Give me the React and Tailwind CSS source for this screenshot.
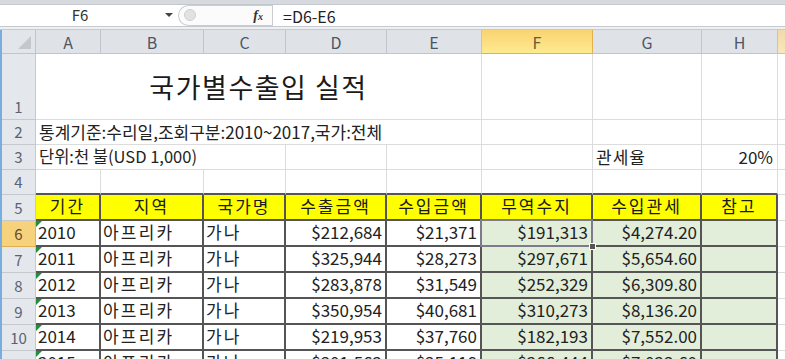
import clsx from 'clsx'

const font = "font-['Noto_Sans_CJK_KR','Noto_Sans',sans-serif]"

const cols = ['A', 'B', 'C', 'D', 'E', 'F', 'G', 'H']

const heads = ['기간', '지역', '국가명', '수출금액', '수입금액', '무역수지', '수입관세', '참고']

const rows = [
  ['2010', '아프리카', '가나', '$212,684', '$21,371', '$191,313', '$4,274.20', ''],
  ['2011', '아프리카', '가나', '$325,944', '$28,273', '$297,671', '$5,654.60', ''],
  ['2012', '아프리카', '가나', '$283,878', '$31,549', '$252,329', '$6,309.80', ''],
  ['2013', '아프리카', '가나', '$350,954', '$40,681', '$310,273', '$8,136.20', ''],
  ['2014', '아프리카', '가나', '$219,953', '$37,760', '$182,193', '$7,552.00', ''],
  ['2015', '아프리카', '가나', '$301,562', '$35,118', '$266,444', '$7,023.60', ''],
]

const grid = 'border-r border-b border-[#dcdcdc]'
const dark = 'border-r-2 border-b-2 border-[#555]'

function RowHead({ n, active }) {
  return (
    <div className={clsx(
      'flex items-end justify-center pb-[1px] text-[15px] border-r border-b',
      active
        ? 'bg-[#f7d27c] text-[#5d4a2a] border-[#e0b050]'
        : 'bg-[#e4e7ec] text-[#5b6272] border-[#c5c9cf]'
    )}>
      {n}
    </div>
  )
}

function Blank({ className }) {
  return <div className={clsx(grid, className)} />
}

export default function App() {
  return (
    <div className={clsx('w-[785px] h-[359px] overflow-hidden bg-white relative text-[#222]', font)}>
      {/* formula bar */}
      <div className="h-[5px] bg-[#d6dade] border-b border-[#c3c8ce]" />
      <div className="h-[21px] flex items-stretch bg-white">
        <div className="w-[178px] relative flex items-center justify-center text-[15px] text-[#333]">
          <span className="mr-[18px]">F6</span>
          <span className="absolute right-[5px] top-[8px] w-0 h-0 border-l-[4px] border-r-[4px] border-t-[4px] border-l-transparent border-r-transparent border-t-[#444]" />
        </div>
        <div className="w-[94px] relative flex items-center border border-r-0 border-[#c9cdd3] rounded-l-full bg-[#fbfbfc]">
          <span className="absolute left-[5px] top-[3px] w-[12px] h-[12px] rounded-full bg-[#e2e2e2] border border-[#d0d0d0]" />
          <span className="ml-auto mr-[9px] font-['Liberation_Serif',serif] italic font-bold text-[14px] text-[#333] leading-none">
            f<span className="text-[10px]">x</span>
          </span>
        </div>
        <div className="flex-1 flex items-center pl-[10px] text-[16px] text-[#222] border-l border-[#c9cdd3]">
          =D6-E6
        </div>
      </div>
      <div className="h-[4px] bg-[#eef0f2] border-t border-b border-[#c6cad0]" />

      {/* sheet */}
      <div className="grid grid-cols-[34px_65px_103px_82px_101px_95px_111px_109px_76px_1fr] grid-rows-[24px_66px_25px_25px_25px_26px_26px_26px_26px_26px_26px_26px] border-l-2 border-[#79acdf]">
        {/* column headers */}
        <div className="relative bg-[#e2e5ea] border-r border-b border-[#c1c5cb]">
          <svg className="absolute right-[4px] bottom-[4px]" width="13" height="13"><polygon points="13,0 13,13 0,13" fill="#c3c8ce" /></svg>
        </div>
        {cols.map(c => (
          <div
            key={c}
            className={clsx(
              'flex items-center justify-center text-[16px] border-r border-b',
              c === 'F'
                ? 'bg-linear-to-b from-[#f9d372] to-[#feea8f] text-[#6b5a35] border-[#e2b24e]'
                : 'bg-[#dfe3e8] text-[#4d5565] border-[#c1c5cb]'
            )}
          >
            {c}
          </div>
        ))}
        <div className="bg-linear-to-b from-[#f3d9a8] to-[#f8e6bd] border-b border-[#c1c5cb]" />

        {/* row 1 */}
        <RowHead n="1" />
        <div className={clsx('col-span-5 flex items-end justify-center pb-[12px] text-[27px] text-[#1a1a1a] tracking-[1.5px]', grid)}>
          국가별수출입 실적
        </div>
        <Blank />
        <Blank />
        <Blank />
        <Blank className="border-r-0" />

        {/* row 2 */}
        <RowHead n="2" />
        <div className={clsx('col-span-5 flex items-end pl-[3px] text-[17px] whitespace-nowrap', grid)}>
          통계기준:수리일,조회구분:2010~2017,국가:전체
        </div>
        <Blank />
        <Blank />
        <Blank />
        <Blank className="border-r-0" />

        {/* row 3 */}
        <RowHead n="3" />
        <div className={clsx('col-span-3 flex items-end pl-[3px] text-[16.5px] whitespace-nowrap', grid)}>
          단위:천 불(USD 1,000)
        </div>
        <Blank />
        <Blank />
        <Blank />
        <div className={clsx('flex items-end pl-[3px] text-[17px] tracking-[1px]', grid)}>관세율</div>
        <div className={clsx('flex items-end justify-end pr-[4px] text-[17px]', grid)}>20%</div>
        <Blank className="border-r-0" />

        {/* row 4 */}
        <RowHead n="4" />
        {cols.map(c => (
          <div key={c} className={clsx(grid, 'border-b-2 border-b-[#555]')} />
        ))}
        <Blank className="border-r-0" />

        {/* row 5 header */}
        <RowHead n="5" />
        {heads.map(h => (
          <div key={h} className={clsx('flex items-end justify-center pb-[1px] bg-[#ffff00] text-[17px] tracking-[2px] text-[#1a1a1a]', dark)}>
            {h}
          </div>
        ))}
        <Blank className="border-r-0" />

        {/* data */}
        {rows.map((r, i) => (
          <Row key={i} n={i + 6} data={r} />
        ))}
      </div>
    </div>
  )
}

function Row({ n, data }) {
  const selected = n === 6
  return (
    <>
      <RowHead n={n} active={selected} />
      {data.map((v, j) => {
        const right = j >= 3
        const green = j >= 5
        return (
          <div
            key={j}
            className={clsx(
              'flex items-end pb-[1px] text-[17px] whitespace-nowrap text-[#222]',
              right ? 'justify-end pr-[3px]' : 'pl-[2px]',
              (j === 1 || j === 2) && 'tracking-[2.2px]',
              green && 'bg-[#e3eeda]',
              (j === 0 || selected && j === 5) && 'relative',
              dark
            )}
          >
            {j === 0 && (
              <svg className="absolute left-0 top-0" width="6" height="6"><polygon points="0,0 6,0 0,6" fill="#1f8f3a" /></svg>
            )}
            {v}
            {selected && j === 5 && (
              <>
                <span className="absolute left-[-2px] top-[-2px] right-[-2px] bottom-[-2px] border-2 border-[#7c7a8b] pointer-events-none" />
                <span className="absolute right-[-5px] bottom-[-5px] w-[7px] h-[7px] bg-[#555] border border-white z-10" />
              </>
            )}
          </div>
        )
      })}
      <Blank className="border-r-0" />
    </>
  )
}
